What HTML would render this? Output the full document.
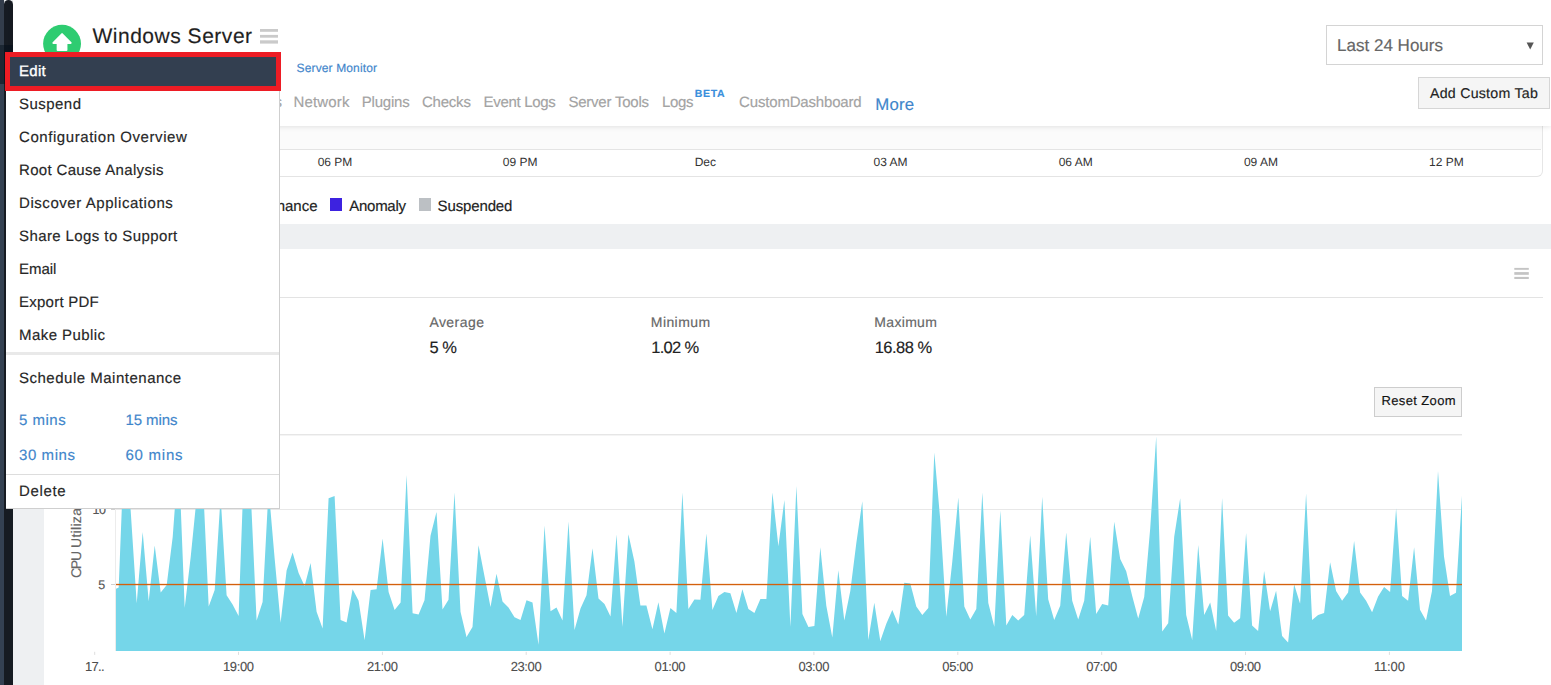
<!DOCTYPE html>
<html><head><meta charset="utf-8"><title>Windows Server</title><style>
html,body{margin:0;padding:0;}
body{width:1551px;height:685px;overflow:hidden;background:#eef0f2;position:relative;font-family:"Liberation Sans", sans-serif;text-rendering:geometricPrecision;}
.abs{position:absolute;}
.t{position:absolute;white-space:nowrap;font-family:"Liberation Sans", sans-serif;-webkit-text-stroke:0.16px;}
.chart{position:absolute;left:0;top:0;}
</style></head><body>
<div class="abs" style="left:0;top:0;width:4px;height:685px;background:#344152;"></div>
<div class="abs" style="left:0;top:0;width:4px;height:45px;background:#333d4b;"></div>
<div class="abs" style="left:0;top:45px;width:4px;height:39px;background:#1c2733;"></div>
<div class="abs" style="left:4px;top:0;width:9px;height:685px;background:#161b22;border-top-left-radius:5px;border-top-right-radius:5px;"></div>
<div class="abs" style="left:4px;top:45px;width:9px;height:39px;background:#0c141e;"></div>
<div class="abs" style="left:44px;top:0;width:1507px;height:224px;background:#fff;"></div>
<div class="abs" style="left:44px;top:126px;width:1498px;height:50px;background:#fff;border-right:1px solid #e6e6e6;border-bottom:1px solid #e4e4e4;border-bottom-right-radius:6px;"></div>
<div class="abs" style="left:44px;top:126px;width:1498px;height:23px;background:#fbfbfb;"></div>
<div class="abs" style="left:44px;top:149px;width:1497px;height:1px;background:#e4e4e4;"></div>
<div class="abs" style="left:13px;top:0;width:1538px;height:126px;background:#fff;box-shadow:0 1px 5px rgba(0,0,0,0.10);"></div>
<div class="abs" style="left:44px;top:249px;width:1507px;height:436px;background:#fff;"></div>
<div class="abs" style="left:44px;top:297px;width:1499px;height:1px;background:#e3e3e3;"></div>
<svg class="abs" style="left:40px;top:20px;" width="46" height="46" viewBox="40 20 46 46"><circle cx="62.05" cy="43.8" r="18.95" fill="#2ecc71"/><path d="M62.05 34.1 L70.7 42.9 L66.44 42.9 L66.44 50.0 L57.66 50.0 L57.66 42.9 L53.4 42.9 Z" fill="#fff" stroke="#fff" stroke-width="2" stroke-linejoin="round"/></svg>
<svg class="abs" style="left:258px;top:26px;" width="24" height="20" viewBox="258 26 24 20"><rect x="260" y="29" width="18" height="2.8" fill="#cacaca"/><rect x="260" y="34.9" width="18" height="2.8" fill="#cacaca"/><rect x="260" y="40.3" width="18" height="3.3" fill="#cacaca"/></svg>
<div class="abs" style="left:1326px;top:25px;width:215px;height:38px;border:1px solid #d4d4d4;background:#fff;"></div>
<svg class="abs" style="left:1526px;top:42px;" width="9" height="8" viewBox="0 0 9 8"><path d="M0.6 0.6 L7.8 0.6 L4.2 7.4 Z" fill="#555"/></svg>
<div class="abs" style="left:1418px;top:77px;width:130px;height:30px;border:1px solid #d6d6d6;background:#f5f5f5;"></div>
<span class="t" style="left:274.5px;top:95px;font-size:15px;line-height:15px;color:#a3a3a3;">s</span>
<div class="abs" style="left:330px;top:198px;width:12px;height:13px;background:#3d22e0;"></div>
<div class="abs" style="left:419px;top:198px;width:12px;height:13px;background:#bcc0c4;"></div>
<svg class="abs" style="left:1510px;top:264px;" width="24" height="20" viewBox="1510 264 24 20"><rect x="1514.3" y="267.9" width="14.5" height="1.9" fill="#c4c4c4"/><rect x="1514.3" y="272.1" width="14.5" height="2.7" fill="#c4c4c4"/><rect x="1514.3" y="276.9" width="14.5" height="2.1" fill="#c4c4c4"/></svg>
<div class="abs" style="left:1374px;top:387px;width:86px;height:27.6px;border:1px solid #cdcdcd;background:#f5f5f5;"></div>
<svg class="chart" width="1551" height="685" viewBox="0 0 1551 685">
<defs><clipPath id="cp"><rect x="116" y="434" width="1346" height="217"/></clipPath></defs>
<rect x="116" y="434.1" width="1346" height="1.3" fill="#e4e4e4"/>
<rect x="116" y="509" width="1346" height="1" fill="#e8e8e8"/>
<rect x="115" y="434" width="1" height="217" fill="#ececec"/>
<rect x="111" y="584" width="4" height="1" fill="#d0d0d0"/>
<rect x="111" y="509" width="4" height="1" fill="#d0d0d0"/>
<path d="M116,651 L116,588.8 L118.7,587.6 L124.7,434.4 L130.7,511.0 L136.7,603.3 L142.7,531.9 L148.7,601.2 L154.7,545.4 L160.7,592.5 L166.7,585.0 L172.7,537.0 L178.7,455.4 L184.7,607.7 L190.7,557.0 L196.7,497.0 L202.7,477.2 L208.7,606.4 L214.7,590.0 L220.6,496.4 L226.6,595.3 L232.6,604.4 L238.6,616.1 L244.6,449.2 L250.6,490.0 L256.6,620.5 L262.6,602.1 L268.6,488.4 L274.6,558.0 L280.6,622.7 L286.6,570.6 L292.6,552.4 L298.6,572.9 L304.6,586.0 L310.6,562.9 L316.6,611.7 L322.6,628.4 L328.6,498.3 L334.6,496.0 L340.6,619.9 L346.6,622.5 L352.6,589.3 L358.6,600.8 L364.6,640.2 L370.6,590.0 L376.6,589.3 L382.6,538.4 L388.6,592.0 L394.6,610.0 L400.6,602.5 L406.6,475.0 L412.6,613.3 L418.6,614.6 L424.5,600.2 L430.5,535.8 L436.5,512.0 L442.5,609.4 L448.5,599.8 L454.5,492.4 L460.5,611.7 L466.5,637.0 L472.5,627.1 L478.5,545.2 L484.5,576.2 L490.5,607.0 L496.5,573.7 L502.5,601.5 L508.5,607.4 L514.5,617.3 L520.5,619.9 L526.5,600.2 L532.5,602.5 L538.5,644.7 L544.5,525.6 L550.5,611.3 L556.5,607.4 L562.5,620.5 L568.5,521.4 L574.5,630.0 L580.5,608.4 L586.5,595.2 L592.5,548.3 L598.5,598.5 L604.5,604.1 L610.5,616.6 L616.5,534.5 L622.4,626.7 L628.4,534.3 L634.4,561.4 L640.4,605.4 L646.4,605.4 L652.4,629.3 L658.4,602.3 L664.4,633.6 L670.4,608.0 L676.4,613.0 L682.4,492.4 L688.4,609.0 L694.4,599.5 L700.4,599.8 L706.4,533.5 L712.4,610.0 L718.4,595.9 L724.4,592.0 L730.4,593.3 L736.4,612.9 L742.4,589.2 L748.4,609.0 L754.4,613.0 L760.4,598.9 L766.4,598.9 L772.4,492.4 L778.4,546.2 L784.4,500.0 L790.4,626.7 L796.4,485.9 L802.4,614.0 L808.4,627.1 L814.4,626.1 L820.3,547.3 L826.3,605.8 L832.3,637.6 L838.3,570.3 L844.3,620.5 L850.3,591.0 L856.3,543.3 L862.3,501.3 L868.3,639.9 L874.3,602.7 L880.3,640.9 L886.3,623.8 L892.3,610.0 L898.3,624.5 L904.3,582.8 L910.3,583.4 L916.3,606.4 L922.3,615.0 L928.3,608.0 L934.3,452.4 L940.3,520.3 L946.3,616.8 L952.3,561.4 L958.3,497.4 L964.3,606.4 L970.3,619.6 L976.3,609.0 L982.3,492.4 L988.3,603.1 L994.3,626.7 L1000.3,510.5 L1006.3,625.5 L1012.3,615.0 L1018.2,620.5 L1024.2,615.0 L1030.2,535.2 L1036.2,616.2 L1042.2,496.7 L1048.2,599.2 L1054.2,619.9 L1060.2,605.8 L1066.2,532.5 L1072.2,600.8 L1078.2,619.5 L1084.2,600.8 L1090.2,536.8 L1096.2,614.0 L1102.2,604.1 L1108.2,605.5 L1114.2,521.8 L1120.2,559.1 L1126.2,571.3 L1132.2,595.9 L1138.2,618.5 L1144.2,597.0 L1150.2,528.6 L1156.2,436.6 L1162.2,631.4 L1168.2,623.2 L1174.2,536.8 L1180.2,498.2 L1186.2,615.0 L1192.2,639.9 L1198.2,545.0 L1204.2,615.0 L1210.2,602.5 L1216.2,631.0 L1222.1,498.0 L1228.1,615.6 L1234.1,622.8 L1240.1,618.2 L1246.1,532.9 L1252.1,625.5 L1258.1,631.0 L1264.1,571.1 L1270.1,611.3 L1276.1,590.8 L1282.1,636.0 L1288.1,642.5 L1294.1,584.2 L1300.1,603.7 L1306.1,493.4 L1312.1,619.9 L1318.1,615.0 L1324.1,613.0 L1330.1,562.2 L1336.1,591.0 L1342.1,600.8 L1348.1,592.6 L1354.1,541.1 L1360.1,592.6 L1366.1,600.8 L1372.1,612.3 L1378.1,596.6 L1384.1,587.0 L1390.1,592.0 L1396.1,508.2 L1402.1,595.9 L1408.1,600.8 L1414.1,547.3 L1420.0,609.7 L1426.0,620.5 L1432.0,591.0 L1438.0,471.1 L1444.0,556.5 L1450.0,595.9 L1456.0,592.7 L1462.0,495.7 L1462,651 Z" fill="#75d6e9" clip-path="url(#cp)"/>
<rect x="116" y="583.85" width="1346" height="1.35" fill="#d4600c"/>
<rect x="94.2" y="651.8" width="1" height="3.1" fill="#dedede"/>
<rect x="238.0" y="651.8" width="1" height="3.1" fill="#dedede"/>
<rect x="381.9" y="651.8" width="1" height="3.1" fill="#dedede"/>
<rect x="525.7" y="651.8" width="1" height="3.1" fill="#dedede"/>
<rect x="669.6" y="651.8" width="1" height="3.1" fill="#dedede"/>
<rect x="813.4" y="651.8" width="1" height="3.1" fill="#dedede"/>
<rect x="957.3" y="651.8" width="1" height="3.1" fill="#dedede"/>
<rect x="1101.2" y="651.8" width="1" height="3.1" fill="#dedede"/>
<rect x="1245.0" y="651.8" width="1" height="3.1" fill="#dedede"/>
<rect x="1388.9" y="651.8" width="1" height="3.1" fill="#dedede"/>
</svg>
<span class="t" style="left:97px;top:577.5px;font-size:14px;line-height:14px;color:#666;transform-origin:0 0;transform:rotate(-90deg) translate(0,-28.5px);"><span style="letter-spacing:-1.25px;">CPU</span><span style="letter-spacing:0.3px;"> Utilization</span></span>
<span class="t" style="left:92.6px;top:504px;font-size:12.5px;line-height:12.5px;color:#555;letter-spacing:-0.6px;">10</span>
<span class="t" style="left:92.40px;top:26px;font-size:21px;line-height:21px;color:#1f1f1f;letter-spacing:0.524px;">Windows Server</span>
<span class="t" style="left:296.60px;top:62px;font-size:12px;line-height:12px;color:#3f86cb;letter-spacing:0.131px;">Server Monitor</span>
<span class="t" style="left:293.50px;top:95px;font-size:15px;line-height:15px;color:#a3a3a3;letter-spacing:0.147px;">Network</span>
<span class="t" style="left:361.80px;top:95px;font-size:15px;line-height:15px;color:#a3a3a3;letter-spacing:-0.217px;">Plugins</span>
<span class="t" style="left:422.00px;top:95px;font-size:15px;line-height:15px;color:#a3a3a3;letter-spacing:-0.226px;">Checks</span>
<span class="t" style="left:483.50px;top:95px;font-size:15px;line-height:15px;color:#a3a3a3;letter-spacing:-0.307px;">Event Logs</span>
<span class="t" style="left:568.40px;top:95px;font-size:15px;line-height:15px;color:#a3a3a3;letter-spacing:-0.227px;">Server Tools</span>
<span class="t" style="left:662.00px;top:95px;font-size:15px;line-height:15px;color:#a3a3a3;letter-spacing:-0.310px;">Logs</span>
<span class="t" style="left:694.70px;top:89px;font-size:10.5px;line-height:10.5px;color:#3a8fdc;letter-spacing:0.729px;font-weight:bold;">BETA</span>
<span class="t" style="left:739.10px;top:95px;font-size:15px;line-height:15px;color:#a3a3a3;letter-spacing:-0.176px;">CustomDashboard</span>
<span class="t" style="left:875.20px;top:97px;font-size:16.8px;line-height:16.8px;color:#3f86cb;letter-spacing:0.222px;">More</span>
<span class="t" style="left:1337.00px;top:37px;font-size:17px;line-height:17px;color:#666666;letter-spacing:0.013px;">Last 24 Hours</span>
<span class="t" style="left:1430.00px;top:87px;font-size:14.2px;line-height:14.2px;color:#222222;letter-spacing:0.244px;">Add Custom Tab</span>
<span class="t" style="left:317.66px;top:156px;font-size:12px;line-height:12px;color:#333333;-webkit-text-stroke:0;">06 PM</span>
<span class="t" style="left:502.86px;top:156px;font-size:12px;line-height:12px;color:#333333;-webkit-text-stroke:0;">09 PM</span>
<span class="t" style="left:694.63px;top:156px;font-size:12px;line-height:12px;color:#333333;-webkit-text-stroke:0;">Dec</span>
<span class="t" style="left:873.48px;top:156px;font-size:12px;line-height:12px;color:#333333;-webkit-text-stroke:0;">03 AM</span>
<span class="t" style="left:1058.68px;top:156px;font-size:12px;line-height:12px;color:#333333;-webkit-text-stroke:0;">06 AM</span>
<span class="t" style="left:1243.88px;top:156px;font-size:12px;line-height:12px;color:#333333;-webkit-text-stroke:0;">09 AM</span>
<span class="t" style="left:1429.06px;top:156px;font-size:12px;line-height:12px;color:#333333;-webkit-text-stroke:0;">12 PM</span>
<span class="t" style="left:349.30px;top:199px;font-size:15px;line-height:15px;color:#222222;letter-spacing:-0.277px;">Anomaly</span>
<span class="t" style="left:437.60px;top:199px;font-size:15px;line-height:15px;color:#222222;letter-spacing:-0.138px;">Suspended</span>
<span class="t" style="left:231.60px;top:199px;font-size:15px;line-height:15px;color:#222222;letter-spacing:0.009px;">Maintenance</span>
<span class="t" style="left:429.40px;top:315px;font-size:14px;line-height:14px;color:#666666;letter-spacing:0.449px;">Average</span>
<span class="t" style="left:429.60px;top:340px;font-size:16.5px;line-height:16.5px;color:#222222;letter-spacing:-0.569px;">5 %</span>
<span class="t" style="left:650.80px;top:315px;font-size:14px;line-height:14px;color:#666666;letter-spacing:0.420px;">Minimum</span>
<span class="t" style="left:651.20px;top:340px;font-size:16.5px;line-height:16.5px;color:#222222;letter-spacing:-0.675px;">1.02 %</span>
<span class="t" style="left:874.30px;top:315px;font-size:14px;line-height:14px;color:#666666;letter-spacing:0.321px;">Maximum</span>
<span class="t" style="left:874.70px;top:340px;font-size:16.5px;line-height:16.5px;color:#222222;letter-spacing:-0.508px;">16.88 %</span>
<span class="t" style="left:1381.40px;top:394px;font-size:13px;line-height:13px;color:#111111;letter-spacing:0.376px;">Reset Zoom</span>
<span class="t" style="left:223.00px;top:660px;font-size:13px;line-height:13px;color:#4d4d4d;letter-spacing:-0.387px;-webkit-text-stroke:0.1px;">19:00</span>
<span class="t" style="left:366.90px;top:660px;font-size:13px;line-height:13px;color:#4d4d4d;letter-spacing:-0.387px;-webkit-text-stroke:0.1px;">21:00</span>
<span class="t" style="left:510.70px;top:660px;font-size:13px;line-height:13px;color:#4d4d4d;letter-spacing:-0.387px;-webkit-text-stroke:0.1px;">23:00</span>
<span class="t" style="left:654.60px;top:660px;font-size:13px;line-height:13px;color:#4d4d4d;letter-spacing:-0.387px;-webkit-text-stroke:0.1px;">01:00</span>
<span class="t" style="left:798.40px;top:660px;font-size:13px;line-height:13px;color:#4d4d4d;letter-spacing:-0.387px;-webkit-text-stroke:0.1px;">03:00</span>
<span class="t" style="left:942.30px;top:660px;font-size:13px;line-height:13px;color:#4d4d4d;letter-spacing:-0.387px;-webkit-text-stroke:0.1px;">05:00</span>
<span class="t" style="left:1086.20px;top:660px;font-size:13px;line-height:13px;color:#4d4d4d;letter-spacing:-0.387px;-webkit-text-stroke:0.1px;">07:00</span>
<span class="t" style="left:1230.00px;top:660px;font-size:13px;line-height:13px;color:#4d4d4d;letter-spacing:-0.387px;-webkit-text-stroke:0.1px;">09:00</span>
<span class="t" style="left:1373.90px;top:660px;font-size:13px;line-height:13px;color:#4d4d4d;letter-spacing:-0.145px;-webkit-text-stroke:0.1px;">11:00</span>
<span class="t" style="left:85.10px;top:660px;font-size:13px;line-height:13px;color:#4d4d4d;letter-spacing:-0.763px;-webkit-text-stroke:0.1px;">17..</span>
<span class="t" style="left:98.30px;top:579px;font-size:12.5px;line-height:12.5px;color:#555555;">5</span>
<div class="abs" style="left:6px;top:52px;width:273px;height:456px;background:#fff;border-right:1px solid #cfcfcf;border-bottom:1px solid #cfcfcf;"></div>
<div class="abs" style="left:5px;top:52px;width:266px;height:29px;background:#333f50;border:5px solid #ed1c24;"></div>
<div class="abs" style="left:6px;top:352px;width:273px;height:3px;background:#e9e9e9;"></div>
<div class="abs" style="left:6px;top:474px;width:273px;height:1px;background:#dddddd;"></div>
<span class="t" style="left:19.00px;top:64px;font-size:15px;line-height:15px;color:#ffffff;letter-spacing:0.314px;-webkit-text-stroke:0.35px #ffffff;">Edit</span>
<span class="t" style="left:19.00px;top:97px;font-size:15px;line-height:15px;color:#262626;letter-spacing:0.464px;">Suspend</span>
<span class="t" style="left:19.00px;top:130px;font-size:15px;line-height:15px;color:#262626;letter-spacing:0.566px;">Configuration Overview</span>
<span class="t" style="left:19.00px;top:163px;font-size:15px;line-height:15px;color:#262626;letter-spacing:0.333px;">Root Cause Analysis</span>
<span class="t" style="left:19.00px;top:196px;font-size:15px;line-height:15px;color:#262626;letter-spacing:0.561px;">Discover Applications</span>
<span class="t" style="left:19.00px;top:229px;font-size:15px;line-height:15px;color:#262626;letter-spacing:0.405px;">Share Logs to Support</span>
<span class="t" style="left:19.00px;top:262px;font-size:15px;line-height:15px;color:#262626;letter-spacing:-0.029px;">Email</span>
<span class="t" style="left:19.00px;top:295px;font-size:15px;line-height:15px;color:#262626;letter-spacing:0.241px;">Export PDF</span>
<span class="t" style="left:19.00px;top:328px;font-size:15px;line-height:15px;color:#262626;letter-spacing:0.430px;">Make Public</span>
<span class="t" style="left:19.00px;top:371px;font-size:15px;line-height:15px;color:#262626;letter-spacing:0.505px;">Schedule Maintenance</span>
<span class="t" style="left:19.00px;top:413px;font-size:15px;line-height:15px;color:#3f86cb;letter-spacing:0.503px;">5 mins</span>
<span class="t" style="left:125.50px;top:413px;font-size:15px;line-height:15px;color:#3f86cb;letter-spacing:-0.089px;">15 mins</span>
<span class="t" style="left:19.00px;top:448px;font-size:15px;line-height:15px;color:#3f86cb;letter-spacing:0.578px;">30 mins</span>
<span class="t" style="left:125.50px;top:448px;font-size:15px;line-height:15px;color:#3f86cb;letter-spacing:0.745px;">60 mins</span>
<span class="t" style="left:19.00px;top:484px;font-size:15px;line-height:15px;color:#262626;letter-spacing:0.668px;">Delete</span>
</body></html>
